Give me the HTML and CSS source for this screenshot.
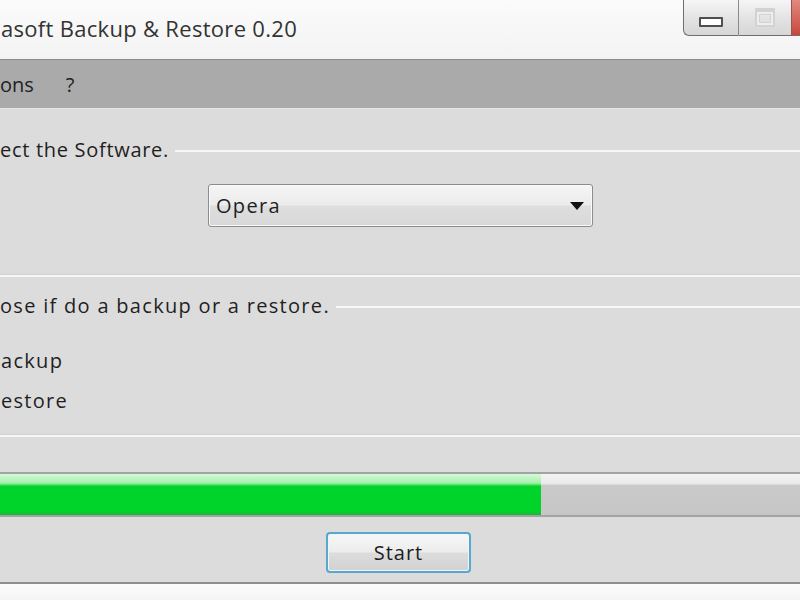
FILE: index.html
```html
<html>
<head>
<meta charset="UTF-8">
<meta name="viewport" content="width=device-width, initial-scale=1.0">
<title>Backup &amp; Restore 0.20</title>
<link rel="stylesheet" href="styles.css">
</head>
<body>
    <div class="window">
        <div class="titlebar">
            <span class="title">asoft Backup &amp; Restore 0.20</span>
            <div class="caption-buttons">
                <div class="cap-btn cap-min"><span class="glyph-min"></span></div>
                <div class="cap-btn cap-max"><span class="glyph-max"></span></div>
                <div class="cap-btn cap-close"></div>
            </div>
        </div>

        <div class="menubar">
            <span class="menu-item">ons</span>
            <span class="menu-item">?</span>
        </div>

        <div class="content">
            <div class="legend legend-first">
                <span>ect the Software.</span>
                <span class="legend-line"></span>
            </div>
            <div class="select">
                <span>Opera</span>
                <span class="select-arrow"></span>
            </div>
            <div class="separator sep-first"></div>

            <div class="legend legend-second">
                <span>ose if do a backup or a restore.</span>
                <span class="legend-line"></span>
            </div>
            <div class="option option-first">ackup</div>
            <div class="option option-second">estore</div>
            <div class="separator sep-second"></div>

            <div class="progress">
                <div class="progress-fill" style="width: 541px"></div>
            </div>

            <div class="actions">
                <button class="btn">Start</button>
            </div>
        </div>
        <div class="footer"></div>
    </div>
</body>
</html>
```

FILE: styles.css
```css
body {
    margin: 0;
    width: 800px;
    height: 600px;
    overflow: hidden;
    background-color: #ffffff;
    font-family: "Open Sans", "Noto Sans", sans-serif;
    color: #1f1f1f;
}
.window {
    display: flex;
    flex-direction: column;
    height: 600px;
}
.titlebar {
    display: flex;
    height: 59px;
    background: linear-gradient(#fbfbfb, #f3f3f3);
}
.title {
    flex: 1;
    font-size: 22px;
    letter-spacing: 0.3px;
    padding-top: 13px;
    padding-left: 1px;
    color: #333333;
}
.caption-buttons {
    display: flex;
    align-self: flex-start;
    height: 36px;
}
.cap-btn {
    display: flex;
    justify-content: center;
    align-items: center;
    box-sizing: border-box;
    height: 36px;
    background: linear-gradient(#f6f6f6, #e2e2e2 55%, #d6d6d6);
    border-bottom: 1px solid #6f6f6f;
}
.cap-min {
    width: 56px;
    border-left: 1px solid #6f6f6f;
    border-right: 1px solid #8a8a8a;
    border-bottom-left-radius: 6px;
    padding-top: 8px;
}
.cap-max {
    width: 53px;
    border-right: 1px solid #a05050;
}
.cap-close {
    width: 8px;
    background: linear-gradient(#e08a7f, #c8473a);
}
.glyph-min {
    width: 20px;
    height: 6px;
    border: 2px solid #4f4f4f;
    border-radius: 1px;
    background-color: #ffffff;
}
.glyph-max {
    width: 16px;
    height: 13px;
    border: 2px solid #d2d2d2;
    border-top-width: 4px;
    border-radius: 1px;
    box-shadow: inset 0 0 0 2px #eeeeee, inset 0 0 0 3px #d2d2d2;
}
.menubar {
    display: flex;
    gap: 32px;
    height: 48px;
    border-top: 1px solid #8c8c8c;
    background-color: #aaaaaa;
    align-items: center;
    font-size: 20px;
    color: #222222;
}
.menu-item {
    padding-top: 1px;
}
.content {
    display: flex;
    flex-direction: column;
    height: 473px;
    background-color: #dcdcdc;
    border-top: 1px solid #e6e6e6;
    font-size: 20px;
    letter-spacing: 1.3px;
}
.legend {
    display: flex;
    align-items: center;
    height: 22px;
}
.legend-first {
    margin-top: 29px;
    letter-spacing: 0.7px;
}
.legend-second {
    margin-top: 17px;
}
.legend-line {
    flex: 1;
    height: 2px;
    margin-left: 6px;
    margin-top: 3px;
    background-color: #f7f7f7;
}
.select {
    display: flex;
    justify-content: space-between;
    align-items: center;
    box-sizing: border-box;
    width: 385px;
    height: 43px;
    margin-top: 24px;
    margin-left: 208px;
    padding: 0 8px 0 7px;
    border: 1px solid #8c8c8c;
    border-radius: 3px;
    background: linear-gradient(#f5f5f5, #ececec 48%, #dedede 52%, #d8d8d8);
    box-shadow: inset 0 0 0 1px #fafafa;
}
.select-arrow {
    width: 0;
    height: 0;
    border-left: 7px solid transparent;
    border-right: 7px solid transparent;
    border-top: 8px solid #111111;
}
.separator {
    height: 2px;
    background-color: #f7f7f7;
    border-top: 1px solid #d2d2d2;
}
.sep-first {
    margin-top: 47px;
}
.option {
    height: 24px;
    line-height: 24px;
    padding-left: 1px;
}
.option-first {
    margin-top: 33px;
}
.option-second {
    margin-top: 16px;
}
.sep-second {
    margin-top: 21px;
}
.progress {
    box-sizing: border-box;
    height: 45px;
    margin-top: 35px;
    border-top: 2px solid #a3a3a3;
    border-bottom: 2px solid #a3a3a3;
    background: linear-gradient(#f4f4f4, #e9e9e9 24%, #c9c9c9 28%, #c6c6c6);
}
.progress-fill {
    height: 100%;
    background: linear-gradient(#d6f8d6, #a6f0ae 22%, #00d42a 30%, #00d32a 92%, #1fb23a);
}
.actions {
    display: flex;
    justify-content: center;
    margin-top: 15px;
}
.btn {
    box-sizing: border-box;
    width: 145px;
    height: 41px;
    margin-left: -3px;
    border: 2px solid #5aa6cf;
    border-radius: 4px;
    background: linear-gradient(#f7f7f7, #ececec 48%, #dcdcdc 52%, #d2d2d2);
    box-shadow: inset 0 0 0 1px #e8f6fd;
    font-family: "Open Sans", "Noto Sans", sans-serif;
    font-size: 20px;
    letter-spacing: 1px;
    color: #1c1c1c;
}
.footer {
    flex: 1;
    border-top: 2px solid #8f8f8f;
    background: linear-gradient(#fdfdfd, #f4f4f4);
}
```
